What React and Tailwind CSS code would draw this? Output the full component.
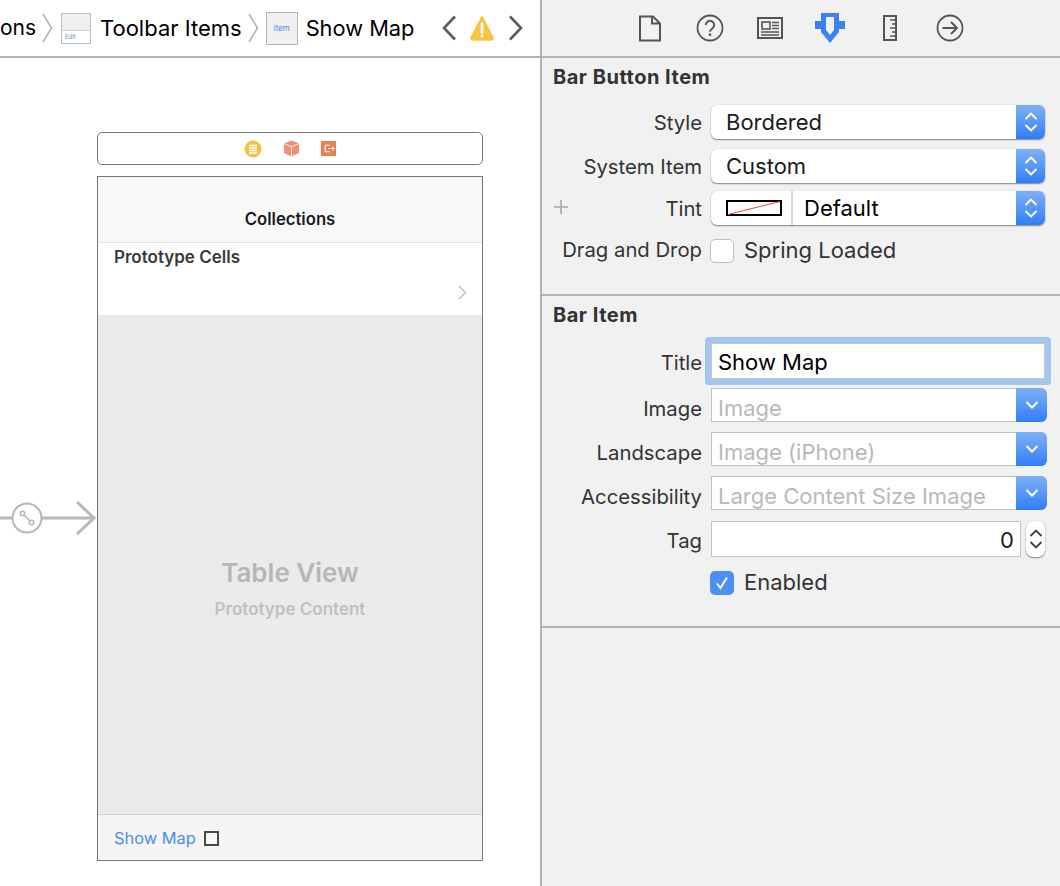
import React from "react";

const FONT = { fontFamily: "Inter, 'Liberation Sans', sans-serif" };

function Crumb() {
  return (
    <svg width="11" height="30" viewBox="0 0 11 30" className="shrink-0">
      <path d="M1 1l8.5 14L1 29" fill="none" stroke="#b4b4b4" strokeWidth="1.6" />
    </svg>
  );
}

function EditThumb() {
  return (
    <div className="flex h-[31px] w-[30px] shrink-0 flex-col border border-[#bdbdbd] bg-white">
      <div className="h-[17px] border-b border-[#d0d0d0] bg-[#f0f0f0]" />
      <div className="pl-[3px] text-[6px] leading-[12px] text-[#6f8fd8]">Edit</div>
    </div>
  );
}

function ItemThumb() {
  return (
    <div className="flex h-[33px] w-[32px] shrink-0 items-center justify-center border border-[#b5b5b5] bg-[#f0f0f0] text-[8px] text-[#4f8bf5]">
      Item
    </div>
  );
}

function Warning() {
  return (
    <svg width="24" height="26" viewBox="0 0 24 26" className="shrink-0">
      <path d="M12 2L22.6 22.5a1.5 1.5 0 0 1-1.3 2.2H2.7a1.5 1.5 0 0 1-1.3-2.2z" fill="#f8c444" stroke="#f8c444" strokeWidth="2" strokeLinejoin="round" />
      <path d="M12 8.5v9" stroke="#fff" strokeWidth="2.6" strokeLinecap="round" />
      <circle cx="12" cy="21" r="1.5" fill="#fff" />
    </svg>
  );
}

function Breadcrumbs() {
  return (
    <div className="flex h-[56px] items-center overflow-hidden whitespace-nowrap bg-white text-[22px] text-black">
      <span className="w-[42px] shrink-0 text-[21px]">ons</span>
      <Crumb />
      <span className="ml-2"><EditThumb /></span>
      <span className="ml-[9px]">Toolbar Items</span>
      <span className="ml-[6px]"><Crumb /></span>
      <span className="ml-[7px]"><ItemThumb /></span>
      <span className="ml-2 w-[136px] shrink-0 text-[21.8px]">Show Map</span>
      <svg width="14" height="26" viewBox="0 0 14 26" className="shrink-0">
        <path d="M13 1.5L2 13l11 11.5" fill="none" stroke="#5b5b5b" strokeWidth="2.6" />
      </svg>
      <span className="ml-[14px]"><Warning /></span>
      <svg width="14" height="26" viewBox="0 0 14 26" className="ml-[15px] shrink-0">
        <path d="M1 1.5L12 13 1 24.5" fill="none" stroke="#5b5b5b" strokeWidth="2.6" />
      </svg>
    </div>
  );
}

function ToolbarDots() {
  return (
    <div className="flex h-[33px] items-center justify-center gap-[21px] rounded-[5px] border border-[#777] bg-white">
      <svg width="18" height="18" viewBox="0 0 18 18">
        <circle cx="9" cy="9" r="8.5" fill="#f4c243" />
        <path d="M5 5.5h8M5 8h8M5 10.5h8M5 13h8" stroke="#fff" strokeWidth="1.3" />
      </svg>
      <svg width="17" height="17" viewBox="0 0 18 18">
        <path d="M9 1l7.500 3v9.500L9 17l-7.500-3.500V4z" fill="#ef9078" strokeLinejoin="round" stroke="#ef9078" />
        <path d="M1.500 4L9 7l7.500-3M9 7v10" stroke="#fff" strokeWidth=".8" fill="none" />
      </svg>
      <svg width="15" height="15" viewBox="0 0 16 16">
        <rect width="16" height="16" fill="#ee7d50" />
        <path d="M9.500 4.500H4.500v7h5M7.500 8H14M12 6l2 2-2 2" stroke="#fff" strokeWidth="1.2" fill="none" />
      </svg>
    </div>
  );
}

function Phone() {
  return (
    <div className="mt-[11px] flex h-[685px] flex-col border border-[#777] bg-[#ebebeb]">
      <div className="flex h-[66px] shrink-0 items-end justify-center border-b border-[#e3e3e3] bg-[#f8f8f8] pb-[10px] text-[16.700px] font-semibold leading-[25px] text-[#1c1c1c]">
        Collections
      </div>
      <div className="h-[72px] shrink-0 bg-white pl-[16px] pr-[15px] pt-[3px]">
        <div className="text-[17px] font-semibold leading-[22px] text-[#3a3a3a]">Prototype Cells</div>
        <div className="mt-[17px] flex justify-end">
          <svg width="9" height="15" viewBox="0 0 9 15">
            <path d="M1 1l6.500 6.500L1 14" fill="none" stroke="#c5c5ca" strokeWidth="1.6" />
          </svg>
        </div>
      </div>
      <div className="flex flex-1 flex-col items-center bg-[#ebebeb] pt-[240px]">
        <div className="text-[26px] font-semibold leading-[36px] text-[#b6b6b6]">Table View</div>
        <div className="mt-[7px] text-[17px] font-semibold leading-[22px] text-[#c0c0c0]">Prototype Content</div>
      </div>
      <div className="flex h-[46px] shrink-0 items-center gap-[8px] border-t border-[#cfcfcf] bg-[#f5f5f5] pl-[16px]">
        <span className="text-[16.400px] leading-[24px] text-[#4c8df6]">Show Map</span>
        <span className="mt-[2px] h-[15px] w-[15px] border-2 border-[#4a4a4a] bg-[#f8f8f8]" />
      </div>
    </div>
  );
}

function Segue() {
  return (
    <svg width="97" height="36" viewBox="0 0 97 36" className="absolute left-0 top-[442px]">
      <g fill="none" stroke="#b8b8b8" strokeWidth="3">
        <path d="M0 18h12M42 18h52" />
        <path d="M77 2l17 16-17 16" />
        <circle cx="27" cy="18" r="14.500" strokeWidth="2" />
        <path d="M24 15l6 6" strokeWidth="1.6" />
        <circle cx="22.500" cy="13.500" r="2.200" strokeWidth="1.500" />
        <circle cx="31.500" cy="22.500" r="2.200" strokeWidth="1.500" />
      </g>
    </svg>
  );
}

function Canvas() {
  return (
    <div className="relative flex-1 overflow-hidden border-t-2 border-[#b3b3b3] bg-white pl-[97px] pr-[57px] pt-[74px]">
      <ToolbarDots />
      <Phone />
      <Segue />
    </div>
  );
}

function TabIcons() {
  return (
    <div className="flex h-[56px] items-center pl-[78px]">
      <div className="flex w-[60px] justify-center">
        <svg width="24" height="27" viewBox="0 0 24 27">
          <path d="M2 1.500h13l7 7v17H2zM14 1.500v7h8" fill="none" stroke="#555" strokeWidth="2" />
        </svg>
      </div>
      <div className="flex w-[60px] justify-center">
        <svg width="28" height="28" viewBox="0 0 28 28">
          <circle cx="14" cy="14" r="12.500" fill="none" stroke="#555" strokeWidth="1.8" />
          <path d="M9.800 11a4.200 4.200 0 1 1 6.500 3.500c-1.500 1-2.300 1.700-2.300 3.200" fill="none" stroke="#555" strokeWidth="2" />
          <rect x="12.800" y="19.500" width="2.400" height="2.400" fill="#555" />
        </svg>
      </div>
      <div className="flex w-[60px] justify-center">
        <svg width="26" height="22" viewBox="0 0 26 22">
          <rect x="1" y="1" width="24" height="20" fill="none" stroke="#555" strokeWidth="2" />
          <rect x="5" y="5" width="8" height="7" fill="none" stroke="#555" strokeWidth="1.6" />
          <path d="M15 5.500h7M15 8.500h7M15 11.500h7M4 15h18M4 18h18" stroke="#555" strokeWidth="1.4" />
        </svg>
      </div>
      <div className="flex w-[60px] justify-center">
        <svg width="30" height="30" viewBox="0 0 30 30">
          <path
            fillRule="evenodd"
            d="M6 0h18v8h6v8h-6v3L15 30 6 19v-3H0V8h6zM11 4v13l4 5 4-5V4z"
            fill="#3b82f6"
          />
        </svg>
      </div>
      <div className="flex w-[60px] justify-center">
        <svg width="14" height="26" viewBox="0 0 14 26">
          <rect x="1" y="1" width="12" height="24" fill="none" stroke="#555" strokeWidth="2" />
          <path d="M7 5h6M9 9h4M7 13h6M9 17h4M7 21h6" stroke="#555" strokeWidth="1.6" />
        </svg>
      </div>
      <div className="flex w-[60px] justify-center">
        <svg width="28" height="28" viewBox="0 0 28 28">
          <circle cx="14" cy="14" r="12.500" fill="none" stroke="#555" strokeWidth="1.8" />
          <path d="M6.500 14h14M15 8l6 6-6 6" fill="none" stroke="#555" strokeWidth="2" />
        </svg>
      </div>
    </div>
  );
}

function Row({ label, labelClass = "", className = "", children }) {
  return (
    <div className={`flex items-center pr-[15px] ${className}`}>
      <div className={`w-[160px] shrink-0 text-right text-[20.300px] text-[#333] ${labelClass}`}>{label}</div>
      <div className="ml-[9px] min-w-0 flex-1">{children}</div>
    </div>
  );
}

function UpDown({ color = "#fff" }) {
  return (
    <svg width="14" height="22" viewBox="0 0 14 22">
      <path d="M1.500 8L7 2.500 12.500 8M1.500 14l5.500 5.500 5.500-5.500" fill="none" stroke={color} strokeWidth="1.9" />
    </svg>
  );
}

function BlueCap({ w = "w-[29px]", children }) {
  return (
    <div className={`flex h-full ${w} shrink-0 items-center justify-center rounded-r-[6px] bg-gradient-to-b from-[#7fb0f4] to-[#2e7df8]`}>
      {children}
    </div>
  );
}

function PopUp({ children }) {
  return (
    <div className="flex h-[34px] items-center rounded-[6px] bg-white text-[22px] text-[#1b1b1b] shadow-[0_1px_1.5px_rgba(0,0,0,0.45),0_0_1px_rgba(0,0,0,0.2)]">
      <div className="flex h-full min-w-0 flex-1 items-center">{children}</div>
      <BlueCap><UpDown /></BlueCap>
    </div>
  );
}

function ComboBox({ placeholder }) {
  return (
    <div className="-mr-[2px] flex h-[34px] items-center rounded-r-[6px] border-y border-l border-[#c2c2c2] border-r-0 bg-white">
      <div className="flex-1 truncate pl-[6px] pt-[7px] text-[22px] text-[#b9b9b9]">{placeholder}</div>
      <div className="-my-px h-[34px]">
        <BlueCap w="w-[31px]">
          <svg width="14" height="10" viewBox="0 0 14 10">
            <path d="M1.500 2L7 7.500 12.500 2" fill="none" stroke="#fff" strokeWidth="2" />
          </svg>
        </BlueCap>
      </div>
    </div>
  );
}

function Check({ on, label }) {
  return (
    <div className="-ml-px flex items-center gap-[10px] text-[22px] text-[#333]">
      {on ? (
        <span className="flex h-[24px] w-[24px] items-center justify-center rounded-[5px] bg-[#4a90f5]">
          <svg width="16" height="16" viewBox="0 0 16 16">
            <path d="M3 8.500l3.500 4.500L13 2.500" fill="none" stroke="#fff" strokeWidth="2" />
          </svg>
        </span>
      ) : (
        <span className="h-[24px] w-[24px] rounded-[5px] border border-[#bdbdbd] bg-white" />
      )}
      <span>{label}</span>
    </div>
  );
}

function Inspector() {
  return (
    <div className="flex h-full w-[518px] shrink-0 flex-col bg-[#f1f1f1]">
      <TabIcons />
      <div className="h-[240px] border-t-2 border-b-2 border-[#b3b3b3] pt-[7px]">
        <div className="pl-[11px] text-[20px] font-bold leading-[24px] tracking-[0.5px] text-[#333]">Bar Button Item</div>
        <div className="relative">
          <Row label="Style" labelClass="pt-[3px]" className="mt-[16px] h-[34px]">
            <PopUp><span className="pl-[15px]">Bordered</span></PopUp>
          </Row>
          <Row label="System Item" labelClass="pt-[3px]" className="mt-[10px] h-[34px]">
            <PopUp><span className="pl-[15px]">Custom</span></PopUp>
          </Row>
          <Row label="Tint" labelClass="pt-[2px]" className="mt-[8px] h-[34px]">
            <PopUp>
              <div className="flex h-full w-[82px] shrink-0 items-center justify-start border-r-2 border-[#d6d6d6] pl-[15px]">
                <svg width="56" height="16" viewBox="0 0 56 16">
                  <rect x="1" y="1" width="54" height="14" fill="#fff" stroke="#000" strokeWidth="2" />
                  <path d="M2 14.500L54 1.500" stroke="#f0413a" strokeWidth="1" />
                </svg>
              </div>
              <span className="pl-[11px] text-black">Default</span>
            </PopUp>
          </Row>
          <svg width="16" height="16" viewBox="0 0 16 16" className="absolute left-[11px] top-[94px]">
            <path d="M8 1v14M1 8h14" stroke="#a8a8a8" strokeWidth="1.6" />
          </svg>
          <Row label="Drag and Drop" className="mt-[9px]">
            <Check label="Spring Loaded" />
          </Row>
        </div>
      </div>
      <div className="h-[332px] border-b-2 border-[#b3b3b3] pt-[7px]">
        <div className="pl-[11px] text-[20px] font-bold leading-[24px] tracking-[0.5px] text-[#333]">Bar Item</div>
        <Row label="Title" labelClass="pt-[5px]" className="mt-[16px] h-[36px]">
          <div className="flex h-[36px] items-center rounded-[1px] border border-[#c8c8c8] bg-white pl-[6px] pt-[3px] text-[22px] text-black shadow-[0_0_0_6px_#a3c6f1]">
            Show Map
          </div>
        </Row>
        <Row label="Image" labelClass="pt-[9px]" className="mt-[9px] h-[34px]"><ComboBox placeholder="Image" /></Row>
        <Row label="Landscape" labelClass="pt-[9px]" className="mt-[10px] h-[34px]"><ComboBox placeholder="Image (iPhone)" /></Row>
        <Row label="Accessibility" labelClass="pt-[9px]" className="mt-[10px] h-[34px]"><ComboBox placeholder="Large Content Size Image" /></Row>
        <Row label="Tag" labelClass="pt-[5px]" className="mt-[11px] h-[36px]">
          <div className="flex items-center gap-[5px]">
            <div className="flex h-[36px] flex-1 items-center justify-end border border-[#c2c2c2] bg-white pr-[6px] pt-[3px] text-[22px] text-[#1b1b1b]">0</div>
            <div className="flex h-[36px] w-[19px] items-center justify-center rounded-[7px] bg-white shadow-[0_1px_1.5px_rgba(0,0,0,0.45),0_0_1px_rgba(0,0,0,0.2)]">
              <UpDown color="#444" />
            </div>
          </div>
        </Row>
        <Row label="" className="mt-[9px]">
          <Check on label="Enabled" />
        </Row>
      </div>
    </div>
  );
}

export default function App() {
  return (
    <div className="flex h-[886px] w-[1060px] overflow-hidden" style={FONT}>
      <div className="flex h-full w-[542px] shrink-0 flex-col border-r-2 border-[#b3b3b3]">
        <Breadcrumbs />
        <Canvas />
      </div>
      <Inspector />
    </div>
  );
}
